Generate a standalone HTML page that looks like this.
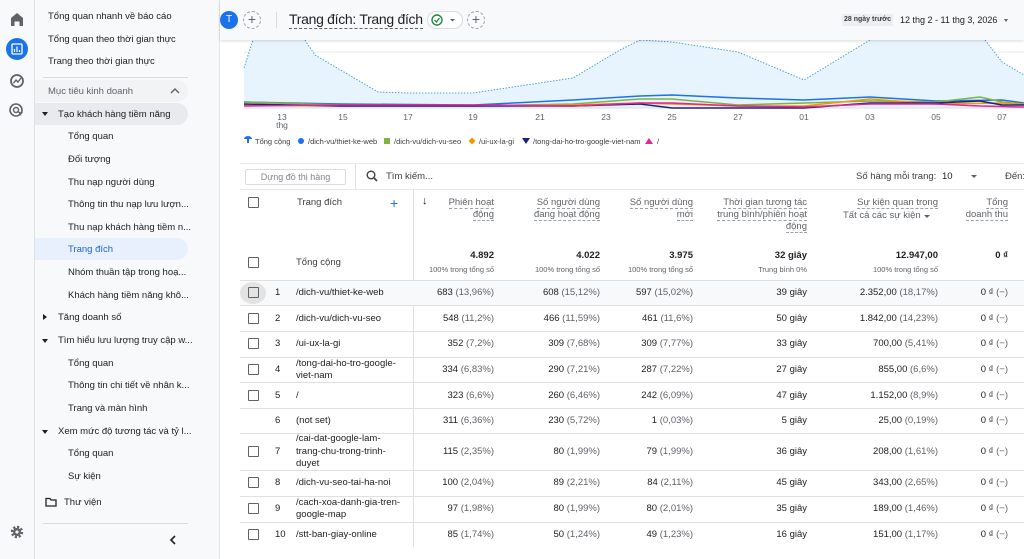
<!DOCTYPE html>
<html><head><meta charset="utf-8">
<style>
*{margin:0;padding:0;box-sizing:border-box}
body{width:1024px;height:559px;overflow:hidden;background:#fff;font-family:"Liberation Sans",Arial,sans-serif;color:#202124;position:relative}
.a{position:absolute;white-space:nowrap}
.rail{left:0;top:0;width:35px;height:559px;background:#f8f9fa;border-right:1px solid #e0e0e0}
.side{left:35px;top:0;width:185px;height:559px;background:#f8f9fa;border-right:1px solid #e8e8e8}
.si{font-size:9.5px;color:#202124}
.sub{left:68px}
.hdr{left:220px;top:0;width:804px;height:40px;background:#f8f9fa;box-shadow:0 1px 3px rgba(0,0,0,.15)}
.cb{width:11px;height:11px;border:1.5px solid #5f6368;border-radius:1px}
.t{font-size:9.5px}
.r{text-align:right}
.g{color:#5f6368}
.hl{border-top:1px solid #e0e0e0}
.hd{font-size:9.5px;color:#5f6368;text-align:right;line-height:12px}
.hd span{border-bottom:1px dashed #9aa0a6}
</style></head><body>
<div class="a rail"></div>
<svg class="a" style="left:0;top:0" width="35" height="559">
<path d="M11 26 V18 L17 13 L23 18 V26 H19.5 V21.5 H14.5 V26 Z" fill="#5f6368"/>
<circle cx="17" cy="49" r="11" fill="#1a73e8"/>
<rect x="12" y="44" width="10" height="10" rx="1" fill="none" stroke="#fff" stroke-width="1.3"/>
<path d="M14.5 52V49M17 52V46.5M19.5 52V50" stroke="#fff" stroke-width="1.2"/>
<circle cx="17" cy="81" r="6" fill="none" stroke="#5f6368" stroke-width="1.8"/>
<path d="M13.5 83 L16 80 L18 82 L21 78" fill="none" stroke="#5f6368" stroke-width="1.4"/>
<circle cx="16" cy="110" r="6" fill="none" stroke="#5f6368" stroke-width="1.6"/>
<circle cx="16" cy="110" r="2.5" fill="none" stroke="#5f6368" stroke-width="1.4"/>
<path d="M17 111 L22 117 L20 113.5 L23.5 113 Z" fill="#5f6368"/>
<circle cx="17" cy="532" r="5" fill="none" stroke="#5f6368" stroke-width="2.4" stroke-dasharray="2.2 1.7"/>
<circle cx="17" cy="532" r="4" fill="#5f6368"/><circle cx="17" cy="532" r="1.6" fill="#f8f9fa"/>
</svg>
<div class="a side"></div>
<div class="a si" style="left:48px;top:11px">Tổng quan nhanh về báo cáo</div>
<div class="a si" style="left:48px;top:34px">Tổng quan theo thời gian thực</div>
<div class="a si" style="left:48px;top:56px">Trang theo thời gian thực</div>
<div class="a" style="left:43px;top:77px;width:145px;border-top:1px solid #dadce0"></div>
<div class="a" style="left:35px;top:80px;width:153px;height:22px;background:#f1f3f4;border-radius:0 11px 11px 0"></div>
<div class="a si g" style="left:48px;top:86px">Mục tiêu kinh doanh</div>
<svg class="a" style="left:170px;top:87px" width="10" height="8"><path d="M1 6 L5 2 L9 6" fill="none" stroke="#5f6368" stroke-width="1.4"/></svg>
<div class="a" style="left:35px;top:103px;width:153px;height:22px;background:#e8eaed;border-radius:0 11px 11px 0"></div>
<div class="a" style="left:42px;top:112px;border-left:3px solid transparent;border-right:3px solid transparent;border-top:4px solid #202124"></div>
<div class="a si" style="left:58px;top:109px">Tạo khách hàng tiềm năng</div>
<div class="a si sub" style="top:131px">Tổng quan</div>
<div class="a si sub" style="top:154px">Đối tượng</div>
<div class="a si sub" style="top:177px">Thu nạp người dùng</div>
<div class="a si sub" style="top:199px">Thông tin thu nạp lưu lượn...</div>
<div class="a si sub" style="top:222px">Thu nạp khách hàng tiềm n...</div>
<div class="a" style="left:35px;top:238px;width:153px;height:22px;background:#e8f0fe;border-radius:0 11px 11px 0"></div>
<div class="a si sub" style="top:244px;color:#1967d2">Trang đích</div>
<div class="a si sub" style="top:267px">Nhóm thuần tập trong hoạ...</div>
<div class="a si sub" style="top:290px">Khách hàng tiềm năng khô...</div>
<div class="a" style="left:43px;top:314px;border-top:3px solid transparent;border-bottom:3px solid transparent;border-left:4px solid #202124"></div>
<div class="a si" style="left:58px;top:312px">Tăng doanh số</div>
<div class="a" style="left:42px;top:339px;border-left:3px solid transparent;border-right:3px solid transparent;border-top:4px solid #202124"></div>
<div class="a si" style="left:58px;top:335px">Tìm hiểu lưu lượng truy cập w...</div>
<div class="a si sub" style="top:358px">Tổng quan</div>
<div class="a si sub" style="top:380px">Thông tin chi tiết về nhân k...</div>
<div class="a si sub" style="top:403px">Trang và màn hình</div>
<div class="a" style="left:42px;top:430px;border-left:3px solid transparent;border-right:3px solid transparent;border-top:4px solid #202124"></div>
<div class="a si" style="left:58px;top:426px">Xem mức độ tương tác và tỷ l...</div>
<div class="a si sub" style="top:448px">Tổng quan</div>
<div class="a si sub" style="top:471px">Sự kiện</div>
<svg class="a" style="left:45px;top:497px" width="12" height="10"><path d="M1 1.5H5L6 3H11V9H1Z" fill="none" stroke="#202124" stroke-width="1.3"/></svg>
<div class="a si" style="left:64px;top:497px">Thư viện</div>
<div class="a" style="left:43px;top:523px;width:145px;border-top:1px solid #dadce0"></div>
<svg class="a" style="left:169px;top:535px" width="8" height="10"><path d="M6 1 L2 5 L6 9" fill="none" stroke="#202124" stroke-width="1.6"/></svg>

<svg class="a" style="left:220px;top:40px" width="804" height="115">
<line x1="24" y1="12" x2="804" y2="12" stroke="#e8e8e8"/>
<path d="M24 28 L33 0 L85 0 L95 15 L158 52 L188 53 L253 53 L353 38 L400 10 L420 0 L452 2 L518 12 L584 40 L650 0 L765 0 L782 22 L804 35 L804 68 L24 68 Z" fill="#e8f4fd"/>
<path d="M24 28 L33 0 M85 0 L95 15 L158 52 L188 53 L253 53 L353 38 L400 10 L420 0 M420 0 L452 2 L518 12 L584 40 L650 0 M765 0 L782 22 L804 35" fill="none" stroke="#4aa3df" stroke-width="1" stroke-dasharray="1.5 1.5"/>
<line x1="24" y1="68" x2="804" y2="68" stroke="#dadce0"/>
<polyline points="24,62 120,64 253,65 353,60 420,56 452,55 518,58 584,60 650,57 716,61 782,60 804,63" fill="none" stroke="#1a73e8" stroke-width="1.5"/>
<polyline points="24,62 120,65 253,66 353,64 420,59 452,59 518,65 584,63 650,61 716,62 760,57 782,62 804,64" fill="none" stroke="#7cb342" stroke-width="1.5"/>
<polyline points="24,65 120,66 253,66 353,65 420,63 452,64 518,66 584,66 650,59 716,64 782,63 804,64" fill="none" stroke="#f29900" stroke-width="1.5"/>
<polyline points="24,64 120,66 253,66 353,66 420,64 452,68 518,68 584,68 650,63 716,63 760,61 782,65 804,65" fill="none" stroke="#1a237e" stroke-width="1.5"/>
<polyline points="24,66 120,65 253,65 353,66 420,63 452,63 518,66 584,67 650,64 716,64 760,66 804,67" fill="none" stroke="#e52592" stroke-width="1.5"/>
<g font-size="8.5" fill="#5f6368" text-anchor="middle" font-family="Liberation Sans">
<text x="62" y="80">13</text><text x="62" y="88">thg</text><text x="123" y="80">15</text><text x="188" y="80">17</text><text x="253" y="80">19</text><text x="320" y="80">21</text><text x="386" y="80">23</text><text x="452" y="80">25</text><text x="518" y="80">27</text><text x="584" y="80">01</text><text x="650" y="80">03</text><text x="716" y="80">05</text><text x="782" y="80">07</text>
</g>
<g font-size="7.5" fill="#3c4043" font-family="Liberation Sans">
<path d="M24 99 a4 3 0 0 1 8 0 h-3 v4 h-2 v-4 Z" fill="#1a73e8"/><text x="35" y="104">Tổng cộng</text>
<circle cx="81" cy="101" r="3" fill="#1a73e8"/><text x="88" y="104">/dich-vu/thiet-ke-web</text>
<rect x="164" y="98" width="6" height="6" fill="#7cb342"/><text x="174" y="104">/dich-vu/dich-vu-seo</text>
<path d="M252 97.5 L255.5 101 L252 104.5 L248.5 101 Z" fill="#f29900"/><text x="259" y="104">/ui-ux-la-gi</text>
<path d="M302 98 L310 98 L306 104 Z" fill="#1a237e"/><text x="313" y="104">/tong-dai-ho-tro-google-viet-nam</text>
<path d="M425 104 L429 98 L433 104 Z" fill="#e52592"/><text x="437" y="104">/</text>
</g>
</svg>

<div class="a hdr"></div>
<div class="a" style="left:220px;top:11px;width:18px;height:18px;border-radius:50%;background:#1a73e8;color:#fff;font-size:10px;text-align:center;line-height:18px">T</div>
<div class="a" style="left:243px;top:11px;width:18px;height:18px;border-radius:50%;border:1px dashed #9aa0a6;color:#5f6368;font-size:14px;text-align:center;line-height:15px">+</div>
<div class="a" style="left:276px;top:12px;height:16px;border-left:1px solid #dadce0"></div>
<div class="a" style="left:289px;top:11px;font-size:14px;letter-spacing:-0.3px;color:#202124;border-bottom:1px dashed #5f6368;line-height:17px">Trang đích: Trang đích</div>
<div class="a" style="left:427px;top:11px;width:36px;height:18px;border:1px solid #dadce0;border-radius:9px;background:#fff"></div>
<svg class="a" style="left:430px;top:13px" width="30" height="14"><circle cx="7" cy="7" r="5" fill="none" stroke="#1e8e3e" stroke-width="1.4"/><path d="M4.5 7 L6.5 9 L9.5 5" fill="none" stroke="#1e8e3e" stroke-width="1.3"/><path d="M20 6 L22.5 8.5 L25 6Z" fill="#5f6368"/></svg>
<div class="a" style="left:467px;top:11px;width:18px;height:18px;border-radius:50%;border:1px dashed #9aa0a6;color:#5f6368;font-size:14px;text-align:center;line-height:15px">+</div>
<div class="a" style="left:842px;top:14px;height:12px;background:#eceff1;font-size:7px;font-weight:bold;color:#3c4043;padding:0 2px;line-height:12px">28 ngày trước</div>
<div class="a" style="left:900px;top:15px;font-size:9px;color:#202124">12 thg 2 - 11 thg 3, 2026</div>
<div class="a" style="left:1004px;top:19px;border-left:2.5px solid transparent;border-right:2.5px solid transparent;border-top:3px solid #5f6368"></div>

<div class="a" style="left:240px;top:163px;width:784px;border-top:1px solid #e8e8e8"></div>
<div class="a" style="left:245px;top:169px;width:101px;height:16px;border:1px solid #dadce0;border-radius:2px;font-size:9px;color:#80868b;text-align:center;line-height:14px">Dựng đồ thị hàng</div>
<div class="a" style="left:355px;top:164px;height:26px;border-left:1px solid #e0e0e0"></div>
<svg class="a" style="left:366px;top:170px" width="12" height="12"><circle cx="5" cy="5" r="3.8" fill="none" stroke="#3c4043" stroke-width="1.4"/><path d="M8 8 L11 11" stroke="#3c4043" stroke-width="1.6"/></svg>
<div class="a t" style="left:386px;top:171px;color:#3c4043">Tìm kiếm...</div>
<div class="a t" style="left:856px;top:171px;color:#3c4043">Số hàng mỗi trang:</div>
<div class="a t" style="left:942px;top:171px">10</div>
<div class="a" style="left:971px;top:175px;border-left:3px solid transparent;border-right:3px solid transparent;border-top:3.5px solid #5f6368"></div>
<div class="a t" style="left:1005px;top:171px;color:#3c4043">Đến:</div>
<div class="a" style="left:240px;top:189px;width:784px;border-top:1px solid #e8e8e8"></div>
<div class="a" style="left:413px;top:189px;height:358px;border-left:1px solid #e0e0e0"></div>

<div class="a cb" style="left:248px;top:197px"></div>
<div class="a t g" style="left:297px;top:197px;color:#3c4043">Trang đích</div>
<div class="a" style="left:390px;top:195px;color:#1a73e8;font-size:14px">+</div>
<div class="a" style="left:422px;top:195px;font-size:11px;font-weight:bold">↓</div>
<div class="a hd" style="right:530px;top:197px"><span>Phiên hoạt</span><br><span>động</span></div>
<div class="a hd" style="right:424px;top:197px"><span>Số người dùng</span><br><span>đang hoạt động</span></div>
<div class="a hd" style="right:331px;top:197px"><span>Số người dùng</span><br><span>mới</span></div>
<div class="a hd" style="right:217px;top:197px"><span>Thời gian tương tác</span><br><span>trung bình/phiên hoạt</span><br><span>động</span></div>
<div class="a hd" style="right:86px;top:197px"><span>Sự kiện quan trọng</span></div>
<div class="a hd" style="left:843px;top:210px;text-align:left">Tất cả các sự kiện</div>
<div class="a" style="left:924px;top:215px;border-left:3px solid transparent;border-right:3px solid transparent;border-top:3.5px solid #5f6368"></div>
<div class="a hd" style="right:16px;top:197px"><span>Tổng</span><br><span>doanh thu</span></div>

<div class="a cb" style="left:248px;top:257px"></div>
<div class="a t" style="left:296px;top:257px;color:#3c4043">Tổng cộng</div>
<div class="a t r" style="right:530px;top:250px;font-weight:bold">4.892</div>
<div class="a r g" style="right:530px;top:265px;font-size:7.5px">100% trong tổng số</div>
<div class="a t r" style="right:424px;top:250px;font-weight:bold">4.022</div>
<div class="a r g" style="right:424px;top:265px;font-size:7.5px">100% trong tổng số</div>
<div class="a t r" style="right:331px;top:250px;font-weight:bold">3.975</div>
<div class="a r g" style="right:331px;top:265px;font-size:7.5px">100% trong tổng số</div>
<div class="a t r" style="right:217px;top:250px;font-weight:bold">32 giây</div>
<div class="a r g" style="right:217px;top:265px;font-size:7.5px">Trung bình 0%</div>
<div class="a t r" style="right:86px;top:250px;font-weight:bold">12.947,00</div>
<div class="a r g" style="right:86px;top:265px;font-size:7.5px">100% trong tổng số</div>
<div class="a t r" style="right:16px;top:250px;font-weight:bold">0 ₫</div>

<div class="a" style="left:240px;top:280px;width:784px;height:25px;background:#f8f9fa"></div>
<div class="a" style="left:240px;top:282px;width:26px;height:22px;border-radius:50%;background:#e3e3e3"></div>

<div class="a hl" style="left:240px;top:280px;width:784px"></div>
<div class="a hl" style="left:240px;top:305px;width:784px"></div>
<div class="a hl" style="left:240px;top:331px;width:784px"></div>
<div class="a hl" style="left:240px;top:357px;width:784px"></div>
<div class="a hl" style="left:240px;top:382px;width:784px"></div>
<div class="a hl" style="left:240px;top:408px;width:784px"></div>
<div class="a hl" style="left:240px;top:433px;width:784px"></div>
<div class="a hl" style="left:240px;top:470px;width:784px"></div>
<div class="a hl" style="left:240px;top:496px;width:784px"></div>
<div class="a hl" style="left:240px;top:522px;width:784px"></div>

<div class="a cb" style="left:248px;top:287px"></div><div class="a t" style="left:275px;top:287px">1</div><div class="a t" style="left:296px;top:287px">/dich-vu/thiet-ke-web</div>
<div class="a t r" style="right:530px;top:287px">683 <span class="g">(13,96%)</span></div><div class="a t r" style="right:424px;top:287px">608 <span class="g">(15,12%)</span></div><div class="a t r" style="right:331px;top:287px">597 <span class="g">(15,02%)</span></div><div class="a t r" style="right:217px;top:287px">39 giây</div><div class="a t r" style="right:86px;top:287px">2.352,00 <span class="g">(18,17%)</span></div><div class="a t r" style="right:16px;top:287px">0 ₫ <span class="g">(−)</span></div>

<div class="a cb" style="left:248px;top:313px"></div><div class="a t" style="left:275px;top:313px">2</div><div class="a t" style="left:296px;top:313px">/dich-vu/dich-vu-seo</div>
<div class="a t r" style="right:530px;top:313px">548 <span class="g">(11,2%)</span></div><div class="a t r" style="right:424px;top:313px">466 <span class="g">(11,59%)</span></div><div class="a t r" style="right:331px;top:313px">461 <span class="g">(11,6%)</span></div><div class="a t r" style="right:217px;top:313px">50 giây</div><div class="a t r" style="right:86px;top:313px">1.842,00 <span class="g">(14,23%)</span></div><div class="a t r" style="right:16px;top:313px">0 ₫ <span class="g">(−)</span></div>

<div class="a cb" style="left:248px;top:338px"></div><div class="a t" style="left:275px;top:338px">3</div><div class="a t" style="left:296px;top:338px">/ui-ux-la-gi</div>
<div class="a t r" style="right:530px;top:338px">352 <span class="g">(7,2%)</span></div><div class="a t r" style="right:424px;top:338px">309 <span class="g">(7,68%)</span></div><div class="a t r" style="right:331px;top:338px">309 <span class="g">(7,77%)</span></div><div class="a t r" style="right:217px;top:338px">33 giây</div><div class="a t r" style="right:86px;top:338px">700,00 <span class="g">(5,41%)</span></div><div class="a t r" style="right:16px;top:338px">0 ₫ <span class="g">(−)</span></div>

<div class="a cb" style="left:248px;top:364px"></div><div class="a t" style="left:275px;top:364px">4</div><div class="a t" style="left:296px;top:358px;line-height:12px">/tong-dai-ho-tro-google-<br>viet-nam</div>
<div class="a t r" style="right:530px;top:364px">334 <span class="g">(6,83%)</span></div><div class="a t r" style="right:424px;top:364px">290 <span class="g">(7,21%)</span></div><div class="a t r" style="right:331px;top:364px">287 <span class="g">(7,22%)</span></div><div class="a t r" style="right:217px;top:364px">27 giây</div><div class="a t r" style="right:86px;top:364px">855,00 <span class="g">(6,6%)</span></div><div class="a t r" style="right:16px;top:364px">0 ₫ <span class="g">(−)</span></div>

<div class="a cb" style="left:248px;top:390px"></div><div class="a t" style="left:275px;top:390px">5</div><div class="a t" style="left:296px;top:390px">/</div>
<div class="a t r" style="right:530px;top:390px">323 <span class="g">(6,6%)</span></div><div class="a t r" style="right:424px;top:390px">260 <span class="g">(6,46%)</span></div><div class="a t r" style="right:331px;top:390px">242 <span class="g">(6,09%)</span></div><div class="a t r" style="right:217px;top:390px">47 giây</div><div class="a t r" style="right:86px;top:390px">1.152,00 <span class="g">(8,9%)</span></div><div class="a t r" style="right:16px;top:390px">0 ₫ <span class="g">(−)</span></div>

<div class="a t" style="left:275px;top:415px">6</div><div class="a t" style="left:296px;top:415px">(not set)</div>
<div class="a t r" style="right:530px;top:415px">311 <span class="g">(6,36%)</span></div><div class="a t r" style="right:424px;top:415px">230 <span class="g">(5,72%)</span></div><div class="a t r" style="right:331px;top:415px">1 <span class="g">(0,03%)</span></div><div class="a t r" style="right:217px;top:415px">5 giây</div><div class="a t r" style="right:86px;top:415px">25,00 <span class="g">(0,19%)</span></div><div class="a t r" style="right:16px;top:415px">0 ₫ <span class="g">(−)</span></div>

<div class="a cb" style="left:248px;top:446px"></div><div class="a t" style="left:275px;top:446px">7</div><div class="a t" style="left:296px;top:433px;line-height:12.5px">/cai-dat-google-lam-<br>trang-chu-trong-trinh-<br>duyet</div>
<div class="a t r" style="right:530px;top:446px">115 <span class="g">(2,35%)</span></div><div class="a t r" style="right:424px;top:446px">80 <span class="g">(1,99%)</span></div><div class="a t r" style="right:331px;top:446px">79 <span class="g">(1,99%)</span></div><div class="a t r" style="right:217px;top:446px">36 giây</div><div class="a t r" style="right:86px;top:446px">208,00 <span class="g">(1,61%)</span></div><div class="a t r" style="right:16px;top:446px">0 ₫ <span class="g">(−)</span></div>

<div class="a cb" style="left:248px;top:477px"></div><div class="a t" style="left:275px;top:477px">8</div><div class="a t" style="left:296px;top:477px">/dich-vu-seo-tai-ha-noi</div>
<div class="a t r" style="right:530px;top:477px">100 <span class="g">(2,04%)</span></div><div class="a t r" style="right:424px;top:477px">89 <span class="g">(2,21%)</span></div><div class="a t r" style="right:331px;top:477px">84 <span class="g">(2,11%)</span></div><div class="a t r" style="right:217px;top:477px">45 giây</div><div class="a t r" style="right:86px;top:477px">343,00 <span class="g">(2,65%)</span></div><div class="a t r" style="right:16px;top:477px">0 ₫ <span class="g">(−)</span></div>

<div class="a cb" style="left:248px;top:503px"></div><div class="a t" style="left:275px;top:503px">9</div><div class="a t" style="left:296px;top:497px;line-height:12px">/cach-xoa-danh-gia-tren-<br>google-map</div>
<div class="a t r" style="right:530px;top:503px">97 <span class="g">(1,98%)</span></div><div class="a t r" style="right:424px;top:503px">80 <span class="g">(1,99%)</span></div><div class="a t r" style="right:331px;top:503px">80 <span class="g">(2,01%)</span></div><div class="a t r" style="right:217px;top:503px">35 giây</div><div class="a t r" style="right:86px;top:503px">189,00 <span class="g">(1,46%)</span></div><div class="a t r" style="right:16px;top:503px">0 ₫ <span class="g">(−)</span></div>

<div class="a cb" style="left:248px;top:529px"></div><div class="a t" style="left:275px;top:529px">10</div><div class="a t" style="left:296px;top:529px">/stt-ban-giay-online</div>
<div class="a t r" style="right:530px;top:529px">85 <span class="g">(1,74%)</span></div><div class="a t r" style="right:424px;top:529px">50 <span class="g">(1,24%)</span></div><div class="a t r" style="right:331px;top:529px">49 <span class="g">(1,23%)</span></div><div class="a t r" style="right:217px;top:529px">16 giây</div><div class="a t r" style="right:86px;top:529px">151,00 <span class="g">(1,17%)</span></div><div class="a t r" style="right:16px;top:529px">0 ₫ <span class="g">(−)</span></div>
</body></html>
